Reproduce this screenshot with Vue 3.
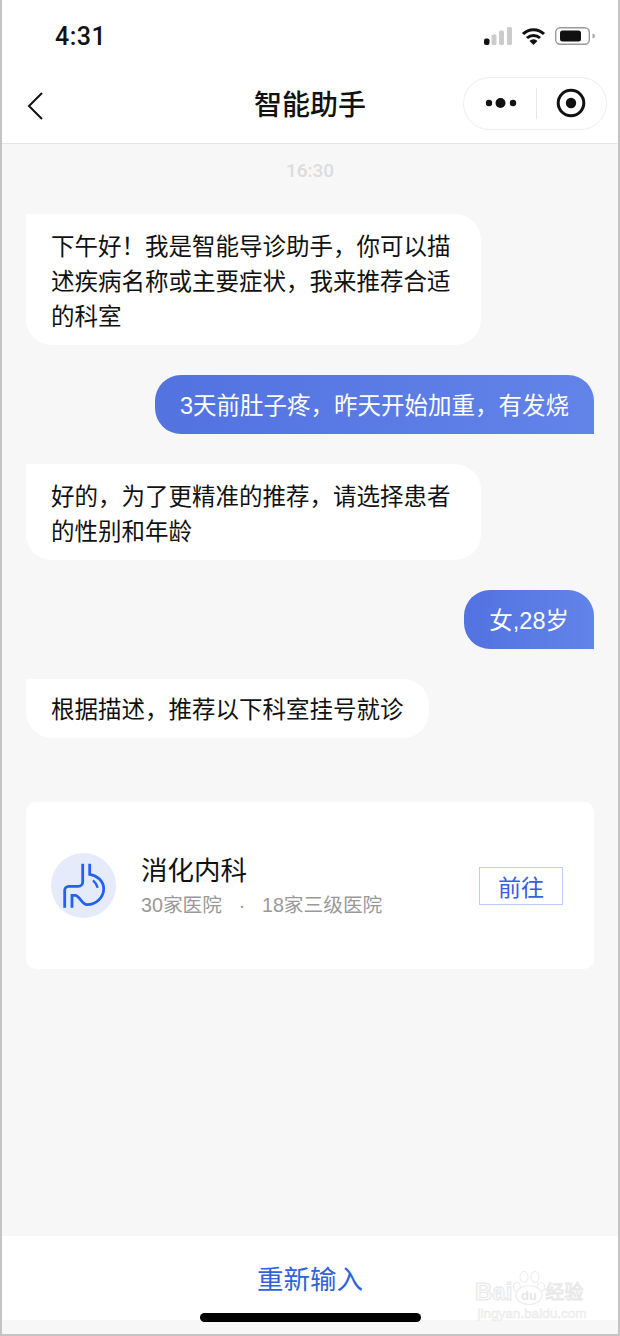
<script setup>
// full-width punctuation kept as escapes
const C = '\uff0c'
const messages = [
  { from: 'bot', text: '下午好\uff01我是智能导诊助手' + C + '你可以描述疾病名称或主要症状' + C + '我来推荐合适的科室' },
  { from: 'me', single: true, text: '3天前肚子疼' + C + '昨天开始加重' + C + '有发烧' },
  { from: 'bot', text: '好的' + C + '为了更精准的推荐' + C + '请选择患者的性别和年龄' },
  { from: 'me', single: true, text: '女,28岁' },
  { from: 'bot', single: true, text: '根据描述' + C + '推荐以下科室挂号就诊' }
]
</script>

<template>
  <div class="phone">
    <div class="status-bar">
      <span class="clock">4:31</span>
      <div class="status-icons">
        <svg width="28" height="18" viewBox="0 0 28 18">
          <rect x="0" y="11.500" width="5.500" height="6.500" rx="2" fill="#111" />
          <rect x="7.500" y="7.500" width="5" height="10.500" rx="1.500" fill="#ccc" />
          <rect x="15" y="3.500" width="5" height="14.500" rx="1.500" fill="#ccc" />
          <rect x="23" y="0" width="5" height="18" rx="1.500" fill="#ccc" />
        </svg>
        <svg width="25" height="18" viewBox="0 0 25 18">
          <path d="M2 7a15 15 0 0 1 21 0M6 11a9.500 9.500 0 0 1 13 0" fill="none" stroke="#111" stroke-width="3" />
          <path d="M12.500 18l-4-4a5.600 5.600 0 0 1 8 0z" fill="#111" />
        </svg>
        <svg width="40" height="18" viewBox="0 0 40 18">
          <rect x="0.700" y="0.700" width="33.600" height="16.600" rx="4.500" fill="none" stroke="#999" stroke-width="1.400" />
          <rect x="5" y="3.500" width="21" height="11" rx="2.500" fill="#111" />
          <path d="M37.500 6.500a2.500 2.500 0 0 1 0 5z" fill="#aaa" />
        </svg>
      </div>
    </div>

    <header class="nav">
      <svg class="back" width="17" height="28" viewBox="0 0 17 28">
        <path d="M16 1L3 14l13 13" fill="none" stroke="#111" stroke-width="2" />
      </svg>
      <h1 class="nav-title">智能助手</h1>
      <div class="capsule">
        <svg width="32" height="12" viewBox="0 0 32 12">
          <circle cx="4" cy="6" r="3.200" fill="#111" />
          <circle cx="15.500" cy="6" r="5" fill="#111" />
          <circle cx="28" cy="6" r="3.200" fill="#111" />
        </svg>
        <span class="capsule-line"></span>
        <svg width="30" height="30" viewBox="0 0 30 30">
          <circle cx="15" cy="15" r="12.800" fill="none" stroke="#111" stroke-width="3" />
          <circle cx="15" cy="15" r="5.200" fill="#111" />
        </svg>
      </div>
    </header>

    <main class="chat">
      <div class="time">16:30</div>
      <div v-for="(m, i) in messages" :key="i" class="row" :class="m.from">
        <div class="bubble" :class="{ single: m.single }">{{ m.text }}</div>
      </div>

      <div class="card">
        <div class="dept-icon">
          <svg width="65" height="65" viewBox="0 0 65 65">
            <path d="M31.700 10.700V29a4.300 4.300 0 0 1-4.300 4.300H17.700a4 4 0 0 0-4 4V54.700" fill="none" stroke="#1f62f5" stroke-width="2.800" />
            <path d="M38.700 10.700V21.300C46 22.300 52.700 28 52.700 35.700C52.700 44.500 45 51.700 36 51.700C31 51.700 28.500 42.300 24 42.300H21V54.700" fill="none" stroke="#1f62f5" stroke-width="2.800" />
            <path d="M42 27.300C44 29 46 31.500 46.700 34.700" fill="none" stroke="#1f62f5" stroke-width="2.400" />
          </svg>
        </div>
        <div class="dept-text">
          <div class="dept-name">消化内科</div>
          <div class="dept-sub">
            <span>30家医院</span>
            <span class="dot">·</span>
            <span>18家三级医院</span>
          </div>
        </div>
        <button class="go">前往</button>
      </div>
    </main>

    <footer class="footer">
      <span class="retry">重新输入</span>
    </footer>
    <div class="bottom-strip"></div>
    <div class="home-bar"></div>

    <div class="watermark">
      <div class="wm-top">
        <span class="wm-bai">Bai</span>
        <svg class="wm-paw" width="33" height="35" viewBox="0 0 33 35">
          <g fill="#fff" stroke="#ececec" stroke-width="1.200">
            <ellipse cx="5" cy="17" rx="3.500" ry="4.500" />
            <ellipse cx="12" cy="7" rx="4" ry="5.500" />
            <ellipse cx="23" cy="7" rx="4" ry="5.500" />
            <ellipse cx="29" cy="17" rx="3.500" ry="4.500" />
            <ellipse cx="17" cy="25" rx="13" ry="9.500" />
          </g>
          <text x="17" y="30" text-anchor="middle" font-size="13" font-weight="700" fill="#e6e6e6">du</text>
        </svg>
        <span class="wm-cn">经验</span>
      </div>
      <div class="wm-url">jingyan.baidu.com</div>
    </div>
  </div>
</template>

<style>
html, body {
  margin: 0;
  padding: 0;
  background: #fff;
}
</style>

<style scoped>
.phone {
  position: relative;
  box-sizing: border-box;
  width: 620px;
  height: 1336px;
  display: flex;
  flex-direction: column;
  overflow: hidden;
  background: #fff;
  border-left: 2px solid #c4c4c4;
  border-right: 2px solid #c4c4c4;
  border-bottom: 2px solid #c4c4c4;
  font-family: "Liberation Sans", "Noto Sans CJK SC", sans-serif;
  color: #111;
}
.status-bar {
  flex: none;
  height: 71px;
  box-sizing: border-box;
  display: flex;
  align-items: center;
  justify-content: space-between;
  padding: 0 23px 0 53px;
}
.clock {
  font-family: Roboto, "Liberation Sans", sans-serif;
  font-size: 25px;
  font-weight: 500;
  letter-spacing: 0.5px;
  margin-top: 2px;
}
.status-icons {
  display: flex;
  align-items: center;
  gap: 9px;
}
.nav {
  flex: none;
  position: relative;
  height: 73px;
  box-sizing: border-box;
  border-bottom: 1px solid #e4e4e4;
  display: flex;
  align-items: center;
  justify-content: space-between;
  padding: 0 11px 8px 24px;
}
.back {
  margin-top: 6px;
}
.nav-title {
  position: absolute;
  left: 0;
  right: 0;
  top: 17px;
  margin: 0;
  text-align: center;
  font-size: 28px;
  line-height: 36px;
  font-weight: 500;
}
.capsule {
  box-sizing: border-box;
  width: 144px;
  height: 53px;
  border: 1px solid #eee;
  border-radius: 27px;
  display: flex;
  align-items: center;
  padding: 0 20px 0 21px;
  justify-content: space-between;
}
.capsule-line {
  width: 1px;
  height: 31px;
  background: #e8e8e8;
}
.chat {
  flex: 1;
  background: #f7f7f7;
  padding: 15px 24px 0;
  display: flex;
  flex-direction: column;
}
.time {
  text-align: center;
  font-family: Roboto, "Liberation Sans", sans-serif;
  font-size: 19px;
  font-weight: 500;
  line-height: 24px;
  color: #dcdcdc;
  margin-bottom: 31px;
}
.row {
  display: flex;
  margin-bottom: 30px;
}
.row.me {
  justify-content: flex-end;
}
.bubble {
  box-sizing: border-box;
  max-width: 455px;
  padding: 15.500px 25px 10.500px;
  font-size: 23.500px;
  line-height: 35px;
  border-radius: 26px;
  background: #fff;
  color: #111;
}
.bubble.single {
  padding: 14px 25px 10px;
}
.row.bot .bubble {
  border-top-left-radius: 0;
}
.row.me .bubble {
  color: #fff;
  background: linear-gradient(90deg, #5273e0, #6283e8);
  border-bottom-right-radius: 0;
}
.card {
  margin-top: 34px;
  height: 167px;
  box-sizing: border-box;
  background: #fff;
  border-radius: 10px;
  padding: 0 31px 0 25px;
  display: flex;
  align-items: center;
}
.dept-icon {
  width: 65px;
  height: 65px;
  border-radius: 50%;
  background: #e6ebfc;
  flex: none;
}
.dept-icon svg {
  display: block;
}
.dept-text {
  flex: 1;
  margin-left: 25px;
}
.dept-name {
  font-size: 26.500px;
  line-height: 36px;
}
.dept-sub {
  display: flex;
  font-size: 19.700px;
  line-height: 28px;
  color: #999;
  margin-top: 2px;
}
.dot {
  width: 40px;
  text-align: center;
}
.go {
  width: 84px;
  height: 38px;
  padding: 0;
  background: #fff;
  border: 1.500px solid #bfcdf8;
  font-family: inherit;
  font-size: 23px;
  color: #3560e0;
}
.footer {
  flex: none;
  height: 84px;
  background: #fff;
  display: flex;
  align-items: center;
  justify-content: center;
  padding-bottom: 2px;
  box-sizing: border-box;
}
.retry {
  font-size: 26.500px;
  color: #2f62dc;
}
.bottom-strip {
  flex: none;
  height: 14px;
  background: #f7f7f7;
}
.home-bar {
  position: absolute;
  left: 198px;
  bottom: 12px;
  width: 221px;
  height: 9px;
  border-radius: 5px;
  background: #000;
}
.watermark {
  position: absolute;
  left: 473px;
  top: 1268px;
  width: 114px;
  color: #fafafa;
  -webkit-text-stroke: 1px #e8e8e8;
  text-align: center;
}
.wm-top {
  display: flex;
  align-items: flex-end;
  height: 37px;
}
.wm-bai {
  font-size: 24px;
  font-weight: 700;
  line-height: 26px;
}
.wm-paw {
  flex: none;
  -webkit-text-stroke: 0;
}
.wm-cn {
  font-size: 19px;
  line-height: 25px;
}
.wm-url {
  font-size: 13.500px;
  line-height: 16px;
  white-space: nowrap;
  -webkit-text-stroke: 0.500px #e8e8e8;
  margin-top: 1px;
}
</style>
